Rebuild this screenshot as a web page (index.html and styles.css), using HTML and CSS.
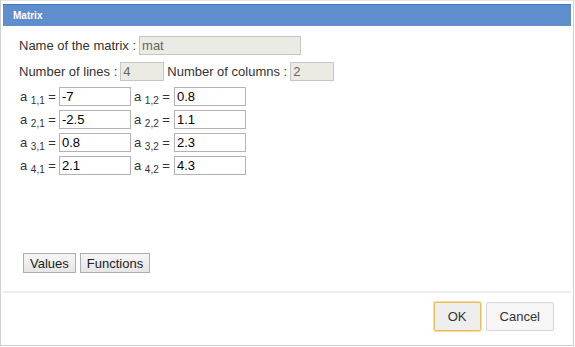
FILE: index.html
```html
<!DOCTYPE html>
<html>

<head>
    <meta charset='utf-8'>
    <title>Matrix</title>
    <meta name='viewport' content='width=device-width, initial-scale=1'>
    <link rel="stylesheet" href="styles.css">
</head>

<body>
    <div class="dialog">
        <div class="header">Matrix</div>
        <div class="content">
            <div class="row first">
                <span class="label">Name of the matrix :</span>
                <input class="field locked name" value="mat" readonly>
            </div>
            <div class="row second">
                <span class="label">Number of lines :</span>
                <input class="field locked small" value="4" readonly>
                <span class="label gap">Number of columns :</span>
                <input class="field locked small" value="2" readonly>
            </div>
            <div class="matrix">
                <div class="row cell-row">
                    <span class="coef">a <sub>1,1</sub> =</span><input class="field cell" value="-7">
                    <span class="coef">a <sub>1,2</sub> =</span><input class="field cell" value="0.8">
                </div>
                <div class="row cell-row">
                    <span class="coef">a <sub>2,1</sub> =</span><input class="field cell" value="-2.5">
                    <span class="coef">a <sub>2,2</sub> =</span><input class="field cell" value="1.1">
                </div>
                <div class="row cell-row">
                    <span class="coef">a <sub>3,1</sub> =</span><input class="field cell" value="0.8">
                    <span class="coef">a <sub>3,2</sub> =</span><input class="field cell" value="2.3">
                </div>
                <div class="row cell-row">
                    <span class="coef">a <sub>4,1</sub> =</span><input class="field cell" value="2.1">
                    <span class="coef">a <sub>4,2</sub> =</span><input class="field cell" value="4.3">
                </div>
            </div>
            <div class="tabs">
                <button class="tab">Values</button>
                <button class="tab">Functions</button>
            </div>
        </div>
        <div class="footer">
            <button class="action default">OK</button>
            <button class="action">Cancel</button>
        </div>
    </div>
</body>

</html>
```

FILE: styles.css
```css
body {
    margin: 0;
    background: white;
    font-family: "Liberation Sans", Arial, sans-serif;
    font-size: 13px;
    color: #333;
}

.dialog {
    box-sizing: border-box;
    width: 574px;
    height: 346px;
    border: 1px solid #cfcfcf;
    border-top-color: #e4e4e4;
    display: flex;
    flex-direction: column;
}

.header {
    margin: 3px 2px 0 2px;
    height: 21px;
    line-height: 21px;
    background-color: #5f8ecd;
    border-top: 1px solid #3b78d2;
    color: white;
    font-size: 10px;
    font-weight: bold;
    padding-left: 10px;
}

.content {
    flex: 1;
    display: flex;
    flex-direction: column;
    padding: 10px 0 18px 18px;
}

.row {
    display: flex;
    align-items: center;
    height: 19px;
}

.first {
    margin-bottom: 7px;
}

.second {
    margin-bottom: 6px;
}

.label {
    margin-right: 3px;
}

.gap {
    margin-left: 3px;
}

.field {
    box-sizing: border-box;
    height: 19px;
    margin: 0;
    padding: 0 2px;
    border: 1px solid #b3b3b3;
    font-family: inherit;
    font-size: 13px;
    color: #000;
    background: white;
    outline: none;
}

.locked {
    background-color: #ebebe4;
    border-color: #c6c6c6;
    color: #666;
}

.name {
    width: 162px;
}

.small {
    width: 44px;
}

.matrix {
    display: flex;
    flex-direction: column;
    gap: 4px;
}

.cell-row {
    height: 19px;
}

.coef {
    width: 40px;
    padding-left: 1px;
    white-space: nowrap;
    box-sizing: border-box;
}

.coef sub {
    font-size: 10px;
    vertical-align: -3px;
    line-height: 0;
}

.cell {
    width: 72px;
    margin-right: 2px;
}

.cell-row .coef:nth-child(3) {
    width: 41px;
}

.tabs {
    margin-top: auto;
    display: flex;
    gap: 4px;
    padding-left: 4px;
}

.tab {
    height: 20px;
    padding: 0 6px;
    font-family: inherit;
    font-size: 13px;
    color: #222;
    background: linear-gradient(#f6f6f6, #e6e6e6);
    border: 1px solid #adadad;
    border-radius: 0;
}

.footer {
    margin: 0 2px;
    border-top: 2px solid #eeeeee;
    display: flex;
    justify-content: flex-end;
    gap: 5px;
    padding: 9px 17px 14px 0;
}

.action {
    height: 29px;
    padding: 0 13px;
    font-family: inherit;
    font-size: 13px;
    color: #333;
    background: #f7f7f7;
    border: 1px solid #d4d4d4;
    border-radius: 2px;
}

.default {
    width: 47px;
    background: #eeeeee;
    border: 1px solid #e8bd5a;
    box-shadow: 0 0 0 1px #f5dda4;
}
```
